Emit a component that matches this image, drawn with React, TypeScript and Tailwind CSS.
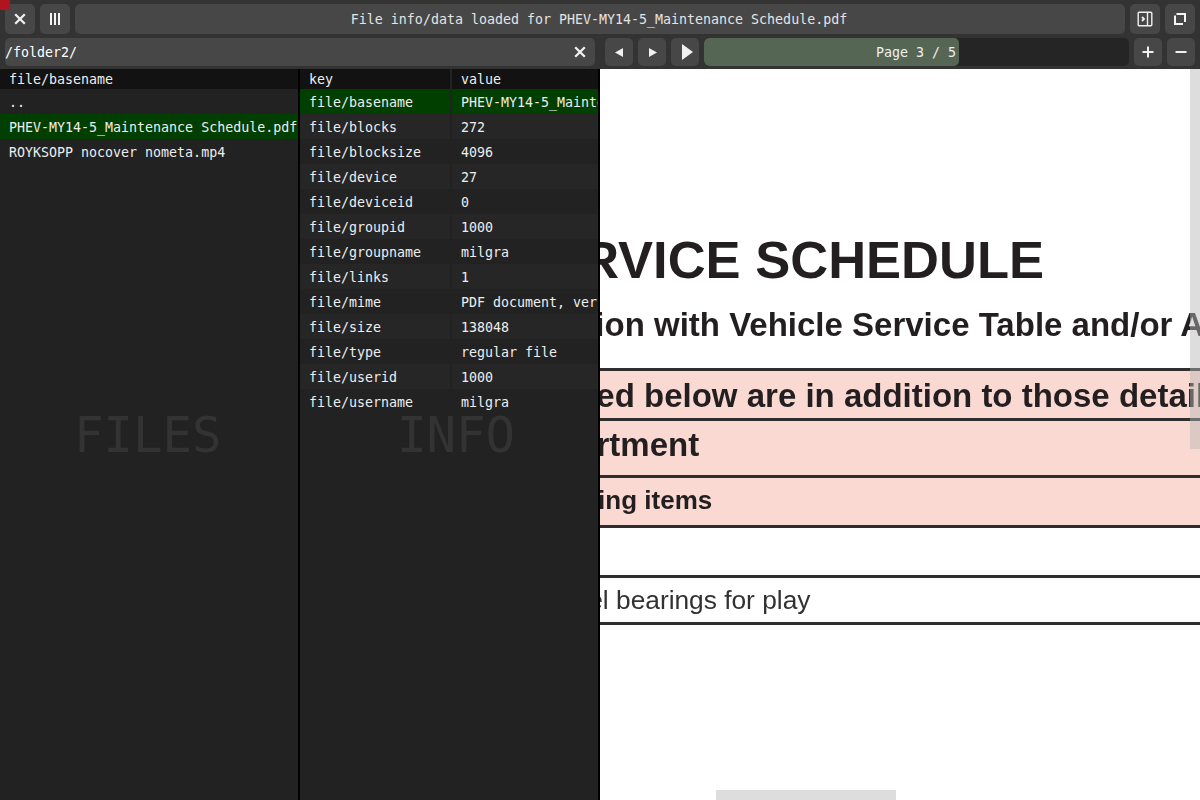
import { ReactNode } from 'react';

const files = ['..', 'PHEV-MY14-5_Maintenance Schedule.pdf', 'ROYKSOPP nocover nometa.mp4'];

const info = [
  ['file/basename', 'PHEV-MY14-5_Maintenance Schedule.pdf'],
  ['file/blocks', '272'],
  ['file/blocksize', '4096'],
  ['file/device', '27'],
  ['file/deviceid', '0'],
  ['file/groupid', '1000'],
  ['file/groupname', 'milgra'],
  ['file/links', '1'],
  ['file/mime', 'PDF document, version 1.5'],
  ['file/size', '138048'],
  ['file/type', 'regular file'],
  ['file/userid', '1000'],
  ['file/username', 'milgra'],
];

function IconButton({ children, width }: { children: ReactNode; width: string }) {
  return (
    <div className={`flex shrink-0 items-center justify-center rounded-[5px] bg-[#474747] text-[#f0f0f0] ${width}`}>
      {children}
    </div>
  );
}

function Triangle({ points, w, h }: { points: string; w: number; h: number }) {
  return (
    <svg width={w} height={h} viewBox={`0 0 ${w} ${h}`} fill="#f0f0f0">
      <polygon points={points} />
    </svg>
  );
}

function CloseIcon() {
  return (
    <svg width="12" height="12" viewBox="0 0 12 12" stroke="#f0f0f0" strokeWidth="2.3">
      <path d="M1.2 1.2l9.6 9.6M10.8 1.2l-9.6 9.6" />
    </svg>
  );
}

export default function App() {
  return (
    <div className="relative flex h-[800px] w-[1200px] flex-col overflow-hidden bg-[#222222] font-['DejaVu_Sans_Mono',monospace] text-[13.3px] text-[#eeeeee]">
      <div className="absolute top-0 left-0 h-[10px] w-[10px] bg-[#b0141c]" />

      <div className="flex h-[69px] shrink-0 flex-col gap-[4px] bg-[#333333] px-[5px] pt-[4px]">
        <div className="flex h-[30px] gap-[5px]">
          <IconButton width="w-[30px]">
            <CloseIcon />
          </IconButton>
          <IconButton width="w-[30px]">
            <svg width="12" height="12" viewBox="0 0 12 12" fill="#f5f5f5">
              <rect x="1" y="0" width="2" height="12" />
              <rect x="5" y="0" width="2" height="12" />
              <rect x="9" y="0" width="2" height="12" />
            </svg>
          </IconButton>
          <div className="flex flex-1 items-center justify-center rounded-[5px] bg-[#474747] pt-[2px] pr-[2px] text-[#e4e4e4]">
            File info/data loaded for PHEV-MY14-5_Maintenance Schedule.pdf
          </div>
          <IconButton width="w-[30px]">
            <svg width="16" height="16" viewBox="0 0 16 16" fill="none" stroke="#f0f0f0" strokeWidth="1.4">
              <rect x="1.2" y="1.2" width="13.6" height="13.6" rx="1" />
              <path d="M10.5 1.5v13" />
              <path d="M5 6l2 2-2 2" strokeWidth="1.8" />
            </svg>
          </IconButton>
          <IconButton width="w-[30px]">
            <svg width="14" height="14" viewBox="0 0 14 14" fill="none" stroke="#f5f5f5" strokeWidth="2">
              <path d="M3.5 2H12V10" />
              <path d="M2 3.5V12H10" />
            </svg>
          </IconButton>
        </div>

        <div className="flex h-[28px] gap-[5px]">
          <div className="flex w-[590px] shrink-0 items-center justify-between rounded-[5px] bg-[#474747] pt-[2px]">
            <span className="text-[#ffffff]">/folder2/</span>
            <div className="mr-[9px] mb-[2px] flex">
              <CloseIcon />
            </div>
          </div>
          <IconButton width="w-[28px] ml-[5px]">
            <Triangle points="8,0 8,9 0,4.5" w={8} h={9} />
          </IconButton>
          <IconButton width="w-[28px]">
            <div className="ml-[2px] flex">
              <Triangle points="0,0 8,4.5 0,9" w={8} h={9} />
            </div>
          </IconButton>
          <IconButton width="w-[28px]">
            <div className="ml-[5px] flex">
              <Triangle points="0,0 11,8 0,16" w={11} h={16} />
            </div>
          </IconButton>
          <div className="relative h-full w-[425px] shrink-0 overflow-hidden rounded-[5px] bg-[#252525]">
            <div className="flex h-full w-[255px] items-center justify-end rounded-[5px] bg-[#566655] pt-[2px] pr-[3px] text-[#f0f0f0]">
              Page 3 / 5
            </div>
          </div>
          <IconButton width="w-[28px]">
            <svg width="12" height="12" viewBox="0 0 12 12" fill="#f0f0f0">
              <rect x="0.5" y="5" width="11" height="2" />
              <rect x="5" y="0.5" width="2" height="11" />
            </svg>
          </IconButton>
          <IconButton width="w-[28px]">
            <svg width="12" height="2" viewBox="0 0 12 2" fill="#f0f0f0">
              <rect x="0.5" y="0" width="11" height="2" />
            </svg>
          </IconButton>
        </div>
      </div>

      <div className="flex min-h-0 flex-1">
        <div className="relative w-[298px] shrink-0">
          <div className="flex h-[20px] items-center bg-[#121212] pt-[2px] pl-[9px]">file/basename</div>
          {files.map((name, i) => (
            <div
              key={name}
              className={`flex h-[25px] items-center overflow-hidden pt-[2px] pl-[9px] whitespace-nowrap ${
                i === 1 ? 'bg-[#003f00]' : 'bg-[#222222]'
              }`}
            >
              {name}
            </div>
          ))}
          <div className="absolute top-[339px] left-[74px] text-[49px] leading-[56px] text-[#333333]">FILES</div>
        </div>

        <div className="w-[2px] shrink-0 bg-[#000000]" />

        <div className="relative w-[298px] shrink-0 overflow-hidden">
          <div className="flex h-[20px] bg-[#121212]">
            <div className="flex w-[152px] items-center border-r-2 border-[#222222] pt-[2px] pl-[9px]">key</div>
            <div className="flex flex-1 items-center pt-[2px] pl-[9px]">value</div>
          </div>
          {info.map(([key, value], i) => (
            <div
              key={key}
              className={`flex h-[25px] items-center whitespace-nowrap ${
                i === 0 ? 'bg-[#003f00]' : i % 2 === 1 ? 'bg-[#262626]' : 'bg-[#222222]'
              }`}
            >
              <div className="flex h-full w-[152px] shrink-0 items-center border-r-2 border-[#222222] pt-[2px] pl-[9px]">
                {key}
              </div>
              <div className="pt-[2px] pl-[9px]">{value}</div>
            </div>
          ))}
          <div className="absolute top-[339px] left-[97px] text-[49px] leading-[56px] text-[#333333]">INFO</div>
        </div>

        <div className="w-[2px] shrink-0 bg-[#000000]" />

        {/* pdf page */}
        <div className="relative min-w-0 flex-1 overflow-hidden bg-white font-['Liberation_Sans',sans-serif] text-[#231f20]">
          <div className="absolute inset-0 blur-[0.5px]">
            <div className="absolute top-[157px] right-[156px] text-[52.5px] leading-[68px] font-bold whitespace-nowrap">
              SERVICE SCHEDULE
            </div>
            <div className="absolute top-[236px] left-[-34px] text-[33px] leading-[40px] font-bold whitespace-nowrap">
              ation with Vehicle Service Table and/or Additional
            </div>
            <div className="absolute top-[299px] right-0 left-0 h-[160px] border-y-[3px] border-[#302d2e] bg-[#fbd9d3]">
              <div className="h-[50px] border-b-[3px] border-[#302d2e]" />
              <div className="h-[57px] border-b-[3px] border-[#302d2e]" />
            </div>
            <div className="absolute top-[307px] left-[-33px] text-[33px] leading-[40px] font-bold whitespace-nowrap">
              sted below are in addition to those detailed
            </div>
            <div className="absolute top-[356px] left-[-42px] text-[33px] leading-[40px] font-bold whitespace-nowrap">
              partment
            </div>
            <div className="absolute top-[414px] left-[-38px] text-[26px] leading-[34px] font-bold whitespace-nowrap">
              owing items
            </div>
            <div className="absolute top-[506px] right-0 left-0 h-[50px] border-y-[3px] border-[#302d2e]" />
            <div className="absolute top-[514px] left-[-60px] text-[26.3px] leading-[34px] whitespace-nowrap text-[#333132]">
              wheel bearings for play
            </div>
          </div>
          <div className="absolute top-0 right-0 h-[380px] w-[10px] bg-[#b7b7b7]/[0.47]" />
          <div className="absolute bottom-0 left-[116px] h-[10px] w-[180px] bg-[#dddddd]" />
        </div>
      </div>
    </div>
  );
}
